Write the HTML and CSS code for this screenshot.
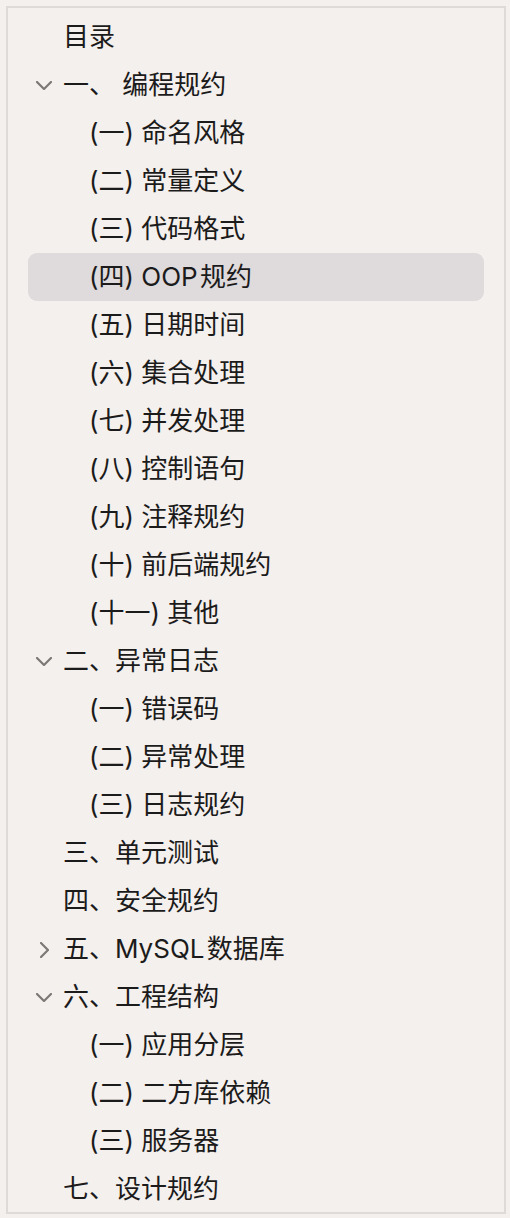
FILE: index.html
```html
<!DOCTYPE html>
<html lang="zh-CN">
<head>
    <meta charset="UTF-8">
    <meta name="viewport" content="width=device-width, initial-scale=1.0">
    <title>目录</title>
    <link rel="stylesheet" href="styles.css">
</head>
<body>
    <nav class="toc">
        <ul class="toc-list">
            <li class="toc-item">目录</li>

            <li class="toc-item has-toggle">
                <svg class="toggle down" viewBox="0 0 16 9"><path d="M1 1l7 7 7-7"/></svg>
                一、 编程规约
            </li>
            <li class="toc-item sub">(一) 命名风格</li>
            <li class="toc-item sub">(二) 常量定义</li>
            <li class="toc-item sub">(三) 代码格式</li>
            <li class="toc-item sub active">(四) OOP&#8202;规约</li>
            <li class="toc-item sub">(五) 日期时间</li>
            <li class="toc-item sub">(六) 集合处理</li>
            <li class="toc-item sub">(七) 并发处理</li>
            <li class="toc-item sub">(八) 控制语句</li>
            <li class="toc-item sub">(九) 注释规约</li>
            <li class="toc-item sub">(十) 前后端规约</li>
            <li class="toc-item sub">(十一) 其他</li>

            <li class="toc-item has-toggle">
                <svg class="toggle down" viewBox="0 0 16 9"><path d="M1 1l7 7 7-7"/></svg>
                二、异常日志
            </li>
            <li class="toc-item sub">(一) 错误码</li>
            <li class="toc-item sub">(二) 异常处理</li>
            <li class="toc-item sub">(三) 日志规约</li>

            <li class="toc-item">三、单元测试</li>
            <li class="toc-item">四、安全规约</li>

            <li class="toc-item has-toggle">
                <svg class="toggle right" viewBox="0 0 9 16"><path d="M1 1l7 7-7 7"/></svg>
                五、MySQL&#8202;数据库
            </li>

            <li class="toc-item has-toggle">
                <svg class="toggle down" viewBox="0 0 16 9"><path d="M1 1l7 7 7-7"/></svg>
                六、工程结构
            </li>
            <li class="toc-item sub">(一) 应用分层</li>
            <li class="toc-item sub">(二) 二方库依赖</li>
            <li class="toc-item sub">(三) 服务器</li>

            <li class="toc-item">七、设计规约</li>
        </ul>
    </nav>
</body>
</html>
```

FILE: styles.css
```css
body {
    margin: 0;
    background-color: #f4f0ed;
    font-family: Inter, "Noto Sans CJK SC", sans-serif;
}

.toc {
    box-sizing: border-box;
    width: 500px;
    height: 1208px;
    margin: 6px 0 0 6px;
    padding: 5px 20px 0;
    border: 2px solid #dedad7;
    background-color: #f4f0ed;
    overflow: hidden;
}

.toc-list {
    list-style: none;
    margin: 0;
    padding: 0;
}

.toc-item {
    position: relative;
    height: 48px;
    line-height: 48px;
    padding-left: 35px;
    font-size: 26px;
    color: #1c1b1b;
    border-radius: 9px;
    white-space: nowrap;
}

.toc-item.sub {
    padding-left: 61px;
}

.toc-item.active {
    background-color: #dfdadb;
}

.toggle {
    position: absolute;
    fill: none;
    stroke: #7b7877;
    stroke-width: 2.2;
    stroke-linecap: round;
    stroke-linejoin: round;
}

.toggle.down {
    left: 8px;
    top: 20px;
    width: 16px;
    height: 9px;
}

.toggle.right {
    left: 12px;
    top: 17px;
    width: 9px;
    height: 16px;
}
```
